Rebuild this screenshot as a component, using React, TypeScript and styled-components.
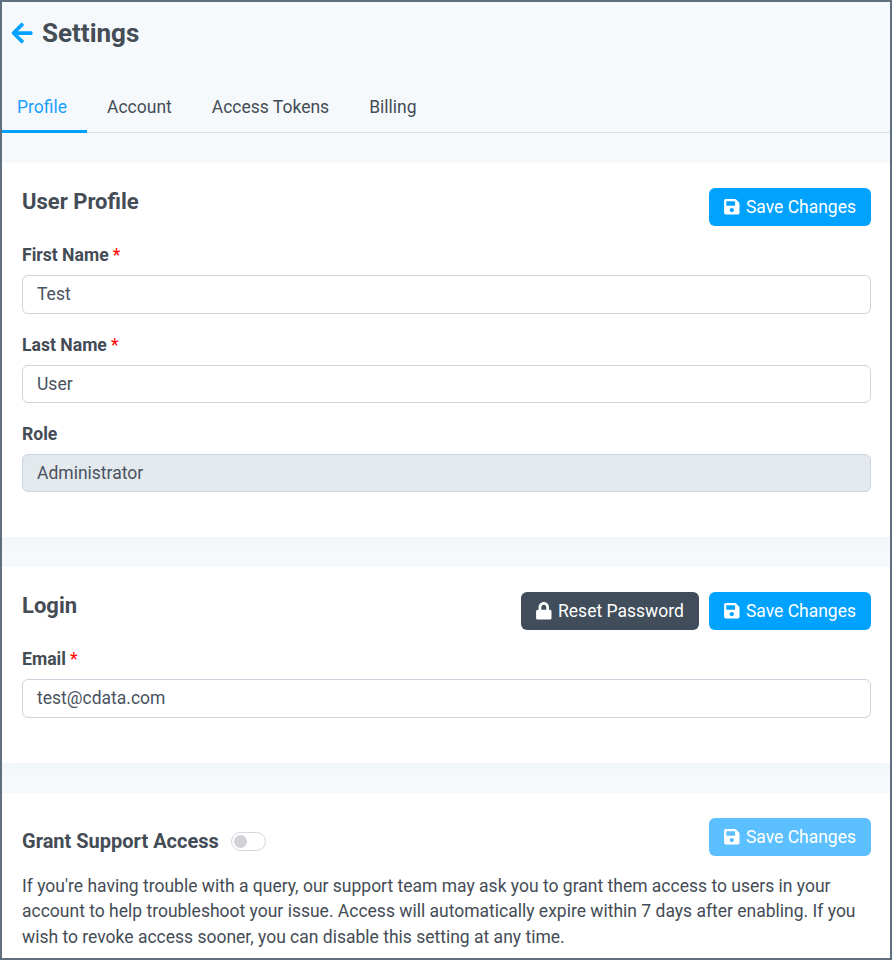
import React from 'react';
import styled, {createGlobalStyle} from 'styled-components';
import {FaArrowLeft, FaLock, FaSave} from 'react-icons/fa';

const GlobalStyle = createGlobalStyle`
  html, body {
    margin: 0;
    padding: 0;
    background: #fff;
  }
  * {
    box-sizing: border-box;
  }
  body {
    font-family: Roboto, "Liberation Sans", sans-serif;
    color: #444c56;
  }
`;

const Frame = styled.div`
  width: 892px;
  height: 960px;
  overflow: hidden;
  border: 2px solid #5f6f7d;
  background: #f5f9fc;
`;

const Header = styled.header`
  height: 131px;
  border-bottom: 1px solid #dbe1ea;
`;

const TitleRow = styled.div`
  display: flex;
  align-items: center;
  gap: 8px;
  height: 62px;
  padding-left: 8px;
`;

const BackIcon = styled(FaArrowLeft)`
  width: 24px;
  height: 24px;
  color: #00a2ff;
`;

const Title = styled.h1`
  margin: 0;
  font-size: 26px;
  font-weight: 700;
  color: #444c56;
`;

const Tabs = styled.nav`
  display: flex;
  margin-top: 18px;
`;

const Tab = styled.a<{$active?: boolean}>`
  height: 51px;
  padding: 1px 20px 0 ${p => (p.$active ? 15 : 20)}px;
  display: flex;
  align-items: center;
  font-size: 17.5px;
  color: ${p => (p.$active ? '#1a9fff' : '#444c56')};
  border-bottom: 3px solid ${p => (p.$active ? '#00a2ff' : 'transparent')};
`;

const Card = styled.section<{$height: number}>`
  height: ${p => p.$height}px;
  margin-top: 30px;
  padding: 25px 19px 0 20px;
  background: #fff;
  box-shadow: 0 8px 16px rgba(60, 80, 100, 0.02);
`;

const CardHead = styled.div`
  display: flex;
  justify-content: space-between;
  align-items: flex-start;
`;

const CardTitle = styled.h2`
  margin: 1px 0 0;
  font-size: 22px;
  line-height: 26px;
  font-weight: 700;
  color: #444c56;
`;

const Actions = styled.div`
  display: flex;
  gap: 10px;
`;

const Button = styled.button<{$variant?: 'dark' | 'muted'}>`
  display: flex;
  align-items: center;
  gap: 5.5px;
  height: 38px;
  padding: 0 15px 0 14px;
  border: 0;
  border-radius: 6px;
  font-family: inherit;
  font-size: 17.5px;
  color: #fff;
  background: ${p =>
    p.$variant === 'dark' ? '#414d5a' : p.$variant === 'muted' ? '#5cbfff' : '#00a2ff'};
  svg {
    width: 17.6px;
    height: 17.6px;
  }
`;

const Field = styled.div`
  margin-top: 19.3px;
  & + & {
    margin-top: 21.1px;
  }
`;

const Label = styled.label`
  display: block;
  height: 21px;
  line-height: 21px;
  margin-bottom: 9px;
  font-size: 17.6px;
  font-weight: 700;
  color: #444c56;
`;

const Required = styled.span`
  color: #f00;
  margin-left: 4px;
  font-weight: 400;
`;

const Input = styled.div<{$disabled?: boolean}>`
  height: 38.3px;
  padding: 0 14px;
  display: flex;
  align-items: center;
  border: 1px solid #ccd4de;
  border-radius: 6px;
  font-size: 17.5px;
  color: #495260;
  background: ${p => (p.$disabled ? '#e4e9ed' : '#fff')};
`;

const GrantHead = styled.div`
  display: flex;
  align-items: center;
  gap: 12px;
  margin-top: 11px;
`;

const GrantTitle = styled.h3`
  margin: 0;
  font-size: 20px;
  font-weight: 700;
  color: #444c56;
`;

const Switch = styled.span`
  display: flex;
  align-items: center;
  width: 35px;
  height: 19px;
  padding: 0 2px;
  border: 1px solid #d3d6da;
  border-radius: 10px;
  background: #fff;
  &::before {
    content: '';
    width: 13px;
    height: 13px;
    border-radius: 50%;
    background: #d0d2d5;
  }
`;

const Description = styled.p`
  margin: 17.5px 0 0;
  font-size: 17.5px;
  line-height: 25.6px;
  color: #444c56;
`;

const App: React.FC = () => {
  return (
    <>
      <GlobalStyle />
      <Frame>
        <Header>
          <TitleRow>
            <BackIcon />
            <Title>Settings</Title>
          </TitleRow>
          <Tabs>
            <Tab $active>Profile</Tab>
            <Tab>Account</Tab>
            <Tab>Access Tokens</Tab>
            <Tab>Billing</Tab>
          </Tabs>
        </Header>

        <Card $height={374}>
          <CardHead>
            <CardTitle>User Profile</CardTitle>
            <Button>
              <FaSave />
              Save Changes
            </Button>
          </CardHead>
          <Field>
            <Label>
              First Name<Required>*</Required>
            </Label>
            <Input>Test</Input>
          </Field>
          <Field>
            <Label>
              Last Name<Required>*</Required>
            </Label>
            <Input>User</Input>
          </Field>
          <Field>
            <Label>Role</Label>
            <Input $disabled>Administrator</Input>
          </Field>
        </Card>

        <Card $height={196}>
          <CardHead>
            <CardTitle>Login</CardTitle>
            <Actions>
              <Button $variant="dark">
                <FaLock />
                Reset Password
              </Button>
              <Button>
                <FaSave />
                Save Changes
              </Button>
            </Actions>
          </CardHead>
          <Field>
            <Label>
              Email<Required>*</Required>
            </Label>
            <Input>test@cdata.com</Input>
          </Field>
        </Card>

        <Card $height={200}>
          <CardHead>
            <GrantHead>
              <GrantTitle>Grant Support Access</GrantTitle>
              <Switch />
            </GrantHead>
            <Button $variant="muted">
              <FaSave />
              Save Changes
            </Button>
          </CardHead>
          <Description>
            If you're having trouble with a query, our support team may ask you to grant them access to users in
            your account to help troubleshoot your issue. Access will automatically expire within 7 days after
            enabling. If you wish to revoke access sooner, you can disable this setting at any time.
          </Description>
        </Card>
      </Frame>
    </>
  );
};

export default App;
